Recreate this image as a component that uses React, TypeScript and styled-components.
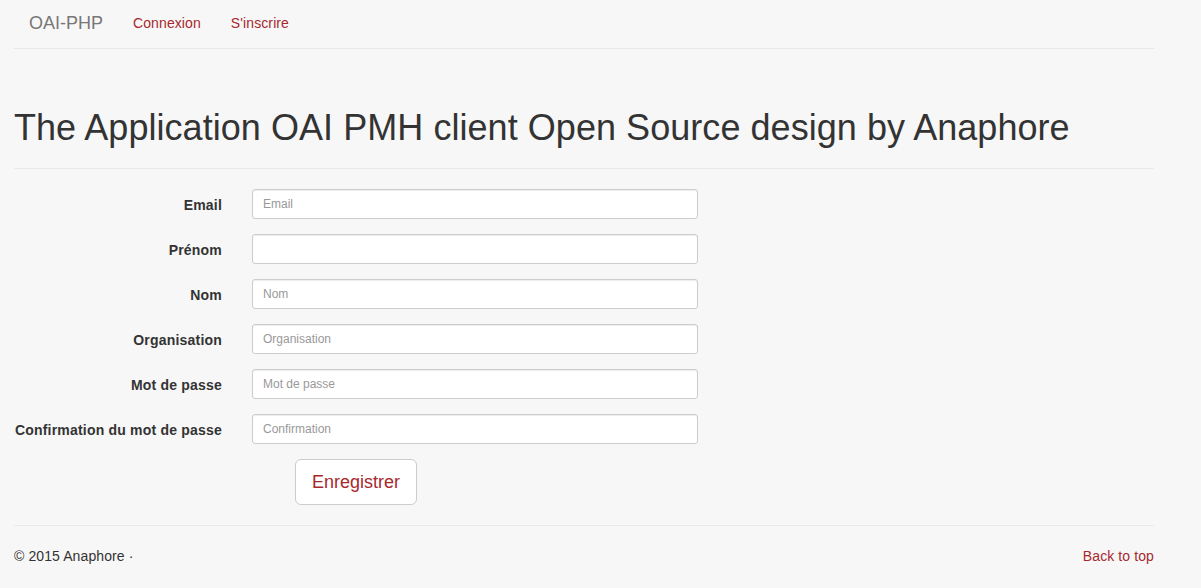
import React from 'react';
import styled, { createGlobalStyle } from 'styled-components';

const GlobalStyle = createGlobalStyle`
    html, body {
        margin: 0;
        padding: 0;
        background: #f7f7f7;
    }
    body {
        font-family: 'Liberation Sans', Arial, Helvetica, sans-serif;
        font-size: 14px;
        line-height: 1.42857;
        color: #333;
    }
    * {
        box-sizing: border-box;
    }
`;

const colors = {
    link: '#a8282d',
    border: '#e7e7e7',
    muted: '#777',
};

const fields = [
    { label: 'Email', placeholder: 'Email', type: 'email' },
    { label: 'Prénom', placeholder: '', type: 'text' },
    { label: 'Nom', placeholder: 'Nom', type: 'text' },
    { label: 'Organisation', placeholder: 'Organisation', type: 'text' },
    { label: 'Mot de passe', placeholder: 'Mot de passe', type: 'password' },
    { label: 'Confirmation du mot de passe', placeholder: 'Confirmation', type: 'password' },
];

export default function App() {
    return (
        <>
            <GlobalStyle />
            <Container>
                <Navbar>
                    <Brand href="#">OAI-PHP</Brand>
                    <NavLink href="#">Connexion</NavLink>
                    <NavLink href="#">S'inscrire</NavLink>
                </Navbar>

                <PageHeader>
                    <Title>The Application OAI PMH client Open Source design by Anaphore</Title>
                </PageHeader>

                <Form onSubmit={(e) => e.preventDefault()}>
                    {fields.map((f) => (
                        <FormRow key={f.label}>
                            <Label>{f.label}</Label>
                            <Input type={f.type} placeholder={f.placeholder} />
                        </FormRow>
                    ))}
                    <FormRow>
                        <span />
                        <SubmitButton type="submit">Enregistrer</SubmitButton>
                    </FormRow>
                </Form>

                <Footer>
                    <span>© 2015 Anaphore ·</span>
                    <FooterLink href="#">Back to top</FooterLink>
                </Footer>
            </Container>
        </>
    );
}

const Container = styled.div`
    width: 1140px;
    margin-left: 14px;
`;

const Navbar = styled.nav`
    display: flex;
    align-items: center;
    height: 49px;
    padding-bottom: 2px;
    border-bottom: 1px solid ${colors.border};
`;

const Brand = styled.a`
    padding: 0 15px;
    font-size: 18px;
    line-height: 20px;
    color: ${colors.muted};
    text-decoration: none;
`;

const NavLink = styled.a`
    padding: 0 15px;
    font-size: 14px;
    line-height: 20px;
    letter-spacing: 0.1px;
    color: ${colors.link};
    text-decoration: none;
`;

const PageHeader = styled.div`
    margin-top: 59px;
    padding-bottom: 20px;
    border-bottom: 1px solid #eaeaea;
`;

const Title = styled.h1`
    margin: 0;
    font-size: 36px;
    font-weight: 500;
    line-height: 40px;
    letter-spacing: 0.05px;
    color: #333;
`;

const Form = styled.form`
    display: flex;
    flex-direction: column;
    gap: 15px;
    padding: 20px 0;
`;

const FormRow = styled.div`
    display: grid;
    grid-template-columns: 208px 446px;
    column-gap: 30px;
    align-items: center;
`;

const Label = styled.label`
    padding-top: 2px;
    text-align: right;
    font-weight: bold;
    font-size: 14px;
    line-height: 20px;
    letter-spacing: 0.2px;
    color: #333;
`;

const Input = styled.input`
    height: 30px;
    padding: 5px 10px;
    font-family: inherit;
    font-size: 12px;
    color: #555;
    background: #fff;
    border: 1px solid #ccc;
    border-radius: 3px;
    box-shadow: inset 0 1px 1px rgba(0, 0, 0, 0.075);
    outline: none;

    &::placeholder {
        color: #999;
    }
`;

const SubmitButton = styled.button`
    justify-self: start;
    margin-left: 43px;
    height: 46px;
    padding: 11px 16px 9px;
    font-family: inherit;
    font-size: 18px;
    line-height: 1.33;
    color: ${colors.link};
    background: #fff;
    border: 1px solid #ccc;
    border-radius: 6px;
    cursor: pointer;
`;

const Footer = styled.footer`
    display: flex;
    justify-content: space-between;
    padding-top: 20px;
    border-top: 1px solid #eaeaea;
    font-size: 14px;
    line-height: 20px;
    letter-spacing: 0.1px;
    color: #333;
`;

const FooterLink = styled.a`
    color: ${colors.link};
    text-decoration: none;
`;
